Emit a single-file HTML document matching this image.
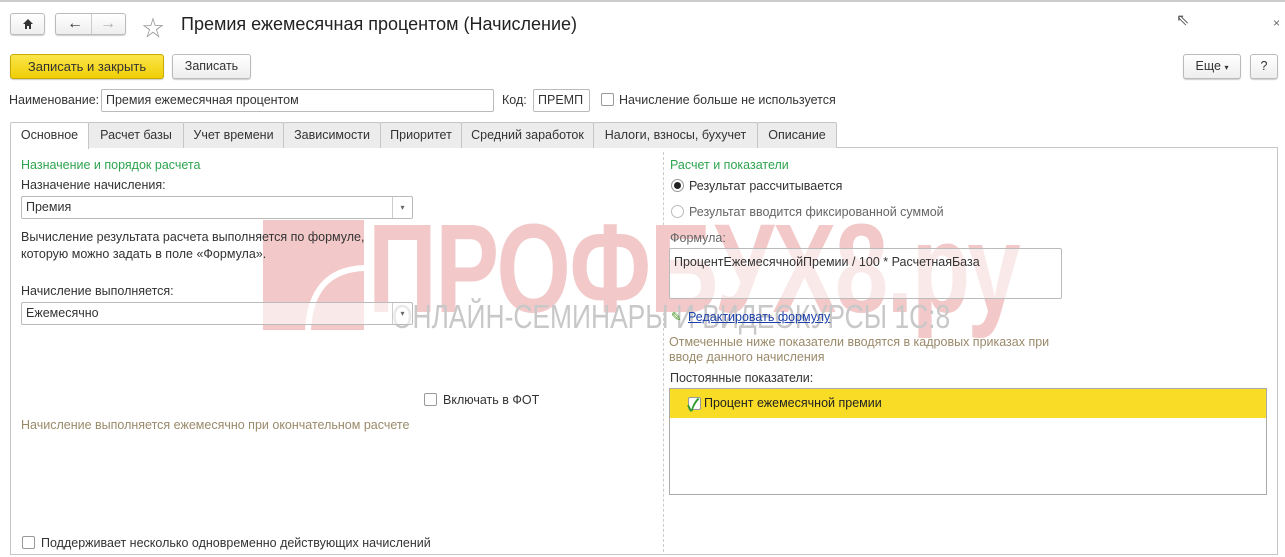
<!DOCTYPE html>
<html><head><meta charset="utf-8"><style>
*{box-sizing:border-box}
body{margin:0;width:1285px;height:557px;background:#fff;font-family:"Liberation Sans","Noto Sans CJK SC",sans-serif;font-size:12.5px;color:#333;position:relative;overflow:hidden}
.a{position:absolute;white-space:nowrap}
.btn{position:absolute;border:1px solid #bbb;border-radius:3px;background:linear-gradient(#fff,#eee);box-shadow:0 1px 1px #ccc;text-align:center}
.inp{position:absolute;border:1px solid #bbb;border-radius:2px;background:#fff;padding-left:4px}
.tab{position:absolute;top:122px;height:26px;border:1px solid #c6c6c6;border-bottom:none;background:#ececec;text-align:center;line-height:24px;border-radius:2px 2px 0 0}
.dd{position:absolute;right:0;top:0;bottom:0;width:20px;border-left:1px solid #ccc;font-size:8px;text-align:center;color:#666}
.cb{position:absolute;width:13px;height:13px;border:1px solid #999;background:#fff;border-radius:2px}
.rb{position:absolute;width:13px;height:13px;border:1px solid #999;border-radius:50%;background:#fff}
</style></head><body>
<div class="a" style="left:0;top:0;width:1285px;height:2px;background:#ccc"></div>
<div class="btn" style="left:10px;top:13px;width:35px;height:22px"><svg width="14" height="14" viewBox="0 0 14 14" style="margin-top:3px"><path d="M2 7L7 2L12 7H10V12H8V9H6V12H4V7Z" fill="#333"/></svg></div>
<div class="btn" style="left:55px;top:13px;width:71px;height:22px"><span style="position:absolute;left:11px;top:1px;font-size:16px;color:#333">←</span><span style="position:absolute;left:35px;top:0;bottom:0;border-left:1px solid #ccc"></span><span style="position:absolute;left:44px;top:1px;font-size:16px;color:#aaa">→</span></div>
<div class="a" style="left:142px;top:11px;font-size:22px;color:#999">☆</div>
<div class="a" style="left:181px;top:14px;font-size:18px;color:#222">Премия ежемесячная процентом (Начисление)</div>
<div class="a" style="left:1176px;top:10px;font-size:16px;color:#555">⇖</div>
<div class="a" style="left:1273px;top:16px;font-size:12px;color:#666">×</div>
<div class="btn" style="left:10px;top:54px;width:154px;height:25px;background:linear-gradient(#fbe54a,#f0cf05);border-color:#c9ab00;color:#333;line-height:23px;font-size:13px">Записать и закрыть</div>
<div class="btn" style="left:172px;top:54px;width:79px;height:25px;line-height:23px">Записать</div>
<div class="btn" style="left:1183px;top:54px;width:58px;height:25px;line-height:23px">Еще <span style="font-size:8px">▾</span></div>
<div class="btn" style="left:1250px;top:54px;width:28px;height:25px;line-height:23px">?</div>
<div class="a" style="left:9px;top:93px">Наименование:</div>
<div class="inp" style="left:101px;top:89px;width:393px;height:23px;line-height:21px">Премия ежемесячная процентом</div>
<div class="a" style="left:502px;top:93px">Код:</div>
<div class="inp" style="left:533px;top:89px;width:57px;height:23px;line-height:21px">ПРЕМП</div>
<div class="cb" style="left:601px;top:93px"></div>
<div class="a" style="left:619px;top:93px">Начисление больше не используется</div>
<div class="a" style="left:10px;top:147px;width:1268px;height:408px;border:1px solid #c6c6c6"></div>
<div class="tab" style="left:10px;width:79px;background:#fff;height:27px">Основное</div>
<div class="tab" style="left:88px;width:96px">Расчет базы</div>
<div class="tab" style="left:183px;width:101px">Учет времени</div>
<div class="tab" style="left:283px;width:98px">Зависимости</div>
<div class="tab" style="left:380px;width:82px">Приоритет</div>
<div class="tab" style="left:461px;width:133px">Средний заработок</div>
<div class="tab" style="left:593px;width:165px">Налоги, взносы, бухучет</div>
<div class="tab" style="left:757px;width:80px">Описание</div>
<div class="a" style="left:663px;top:152px;height:400px;border-left:1px dashed #ccc"></div>

<!-- watermark -->
<div class="a" style="left:263px;top:220px;width:101px;height:110px;background:#f2c8c8"></div>
<svg class="a" style="left:263px;top:220px" width="101" height="110"><path d="M45 110 Q48 50 101 48" stroke="#fff" stroke-width="6" fill="none"/></svg>
<div class="a" style="left:368px;top:204px;font-size:126px;line-height:130px;font-weight:bold;color:#f2c8c8;letter-spacing:-2px;transform:scaleX(0.76);transform-origin:left">ПРОФБУХ8.ру</div>
<div class="a" style="left:392px;top:298px;font-size:33px;color:#c8c8c8;transform:scaleX(0.8);transform-origin:left">ОНЛАЙН-СЕМИНАРЫ И ВИДЕОКУРСЫ 1С:8</div>

<div class="a" style="left:21px;top:158px;color:#2ea44f">Назначение и порядок расчета</div>
<div class="a" style="left:21px;top:178px">Назначение начисления:</div>
<div class="inp" style="left:21px;top:196px;width:392px;height:23px;line-height:21px;background:rgba(255,255,255,.6)">Премия<div class="dd">▾</div></div>
<div class="a" style="left:21px;top:229px;line-height:17px;color:#333">Вычисление результата расчета выполняется по формуле,<br>которую можно задать в поле «Формула».</div>
<div class="a" style="left:21px;top:284px">Начисление выполняется:</div>
<div class="inp" style="left:21px;top:302px;width:392px;height:23px;line-height:21px;background:rgba(255,255,255,.6)">Ежемесячно<div class="dd">▾</div></div>
<div class="cb" style="left:424px;top:393px"></div>
<div class="a" style="left:443px;top:393px">Включать в ФОТ</div>
<div class="a" style="left:21px;top:418px;color:#9a8a6a">Начисление выполняется ежемесячно при окончательном расчете</div>
<div class="cb" style="left:22px;top:536px"></div>
<div class="a" style="left:41px;top:536px">Поддерживает несколько одновременно действующих начислений</div>

<div class="a" style="left:670px;top:158px;color:#2ea44f">Расчет и показатели</div>
<div class="rb" style="left:671px;top:179px"><div style="width:7px;height:7px;border-radius:50%;background:#222;margin:2px"></div></div>
<div class="a" style="left:689px;top:179px">Результат рассчитывается</div>
<div class="rb" style="left:671px;top:205px;border-color:#bbb"></div>
<div class="a" style="left:689px;top:205px;color:#666">Результат вводится фиксированной суммой</div>
<div class="a" style="left:670px;top:231px;color:#666">Формула:</div>
<div class="inp" style="left:669px;top:248px;width:393px;height:51px;padding-top:6px;background:rgba(255,255,255,.6)">ПроцентЕжемесячнойПремии / 100 * РасчетнаяБаза</div>
<div class="a" style="left:671px;top:309px;color:#4a9a2a">✎</div>
<div class="a" style="left:688px;top:310px;color:#1c3fa8;text-decoration:underline">Редактировать формулу</div>
<div class="a" style="left:669px;top:335px;line-height:15px;color:#9a8a6a">Отмеченные ниже показатели вводятся в кадровых приказах при<br>вводе данного начисления</div>
<div class="a" style="left:670px;top:371px">Постоянные показатели:</div>
<div class="a" style="left:669px;top:388px;width:598px;height:107px;border:1px solid #aaa;background:#fff"><div style="height:29px;background:#f8dc25;position:relative"><div class="cb" style="left:18px;top:8px"></div><span style="position:absolute;left:17px;top:2px;color:#2a9a2a;font-size:17px;font-weight:bold">✓</span><span style="position:absolute;left:34px;top:7px;color:#222">Процент ежемесячной премии</span></div></div>
</body></html>
